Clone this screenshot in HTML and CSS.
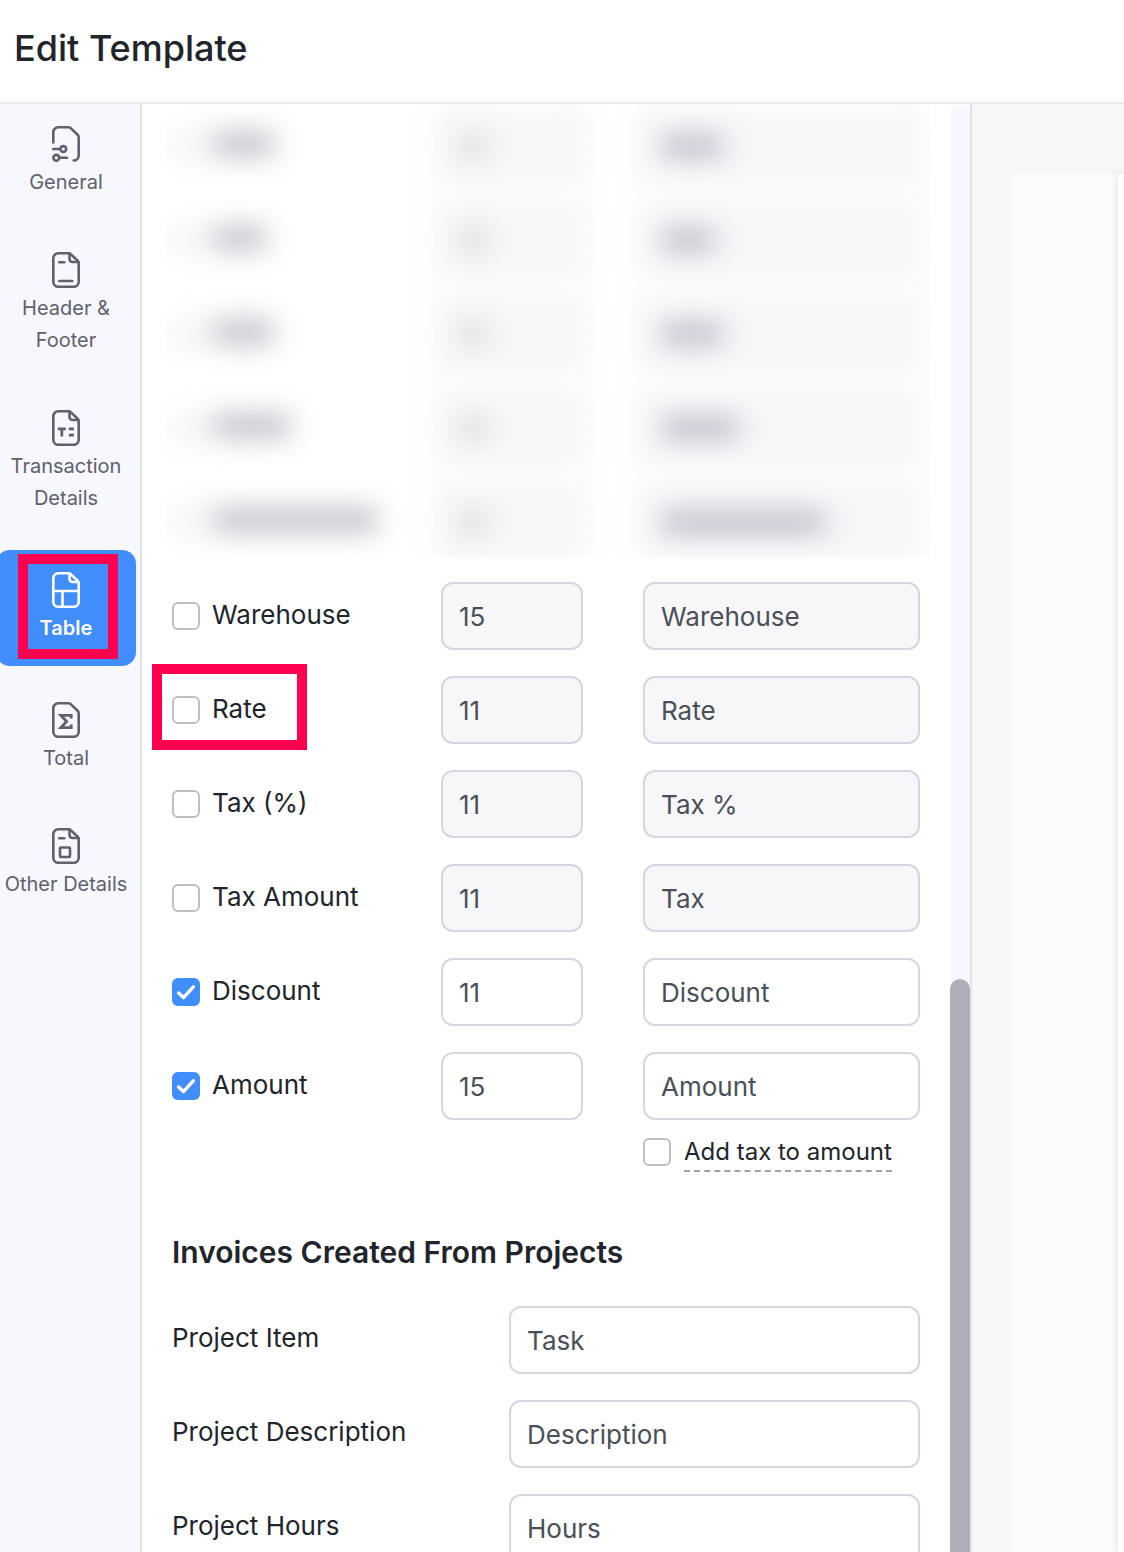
FILE: index.html
```html
<!DOCTYPE html>
<html lang="en">
<head>
  <meta charset="utf-8">
  <title>Edit Template</title>
  <link rel="stylesheet" href="styles.css">
</head>
<body>

  <header class="page-header">
    <h1>Edit Template</h1>
  </header>

  <div class="editor">

    <!-- Section navigation -->
    <nav class="sidebar">
      <a class="nav-item" href="#general">
        <svg class="nav-icon" viewBox="0 0 28 36">
          <path d="M1.3 16.5V6.3a5 5 0 0 1 5-5h9.9a4 4 0 0 1 2.8 1.1l6.4 6.1a4 4 0 0 1 1.3 2.9v18.1a5 5 0 0 1-5 5"/>
          <path d="M1.3 23h6.5M8.5 31.8H15"/>
          <circle cx="11.3" cy="23" r="2.9"/>
          <circle cx="4.3" cy="31.8" r="2.9"/>
        </svg>
        <span>General</span>
      </a>
      <a class="nav-item" href="#header-footer">
        <svg class="nav-icon" viewBox="0 0 28 36">
          <path d="M6.3 1.3h9.9a4 4 0 0 1 2.8 1.1l6.4 6.1a4 4 0 0 1 1.3 2.9v18.3a5 5 0 0 1-5 5H6.3a5 5 0 0 1-5-5V6.3a5 5 0 0 1 5-5z"/>
          <path d="M17.5 1.5V7a3 3 0 0 0 3 3h6M7.3 10.3h5M7.3 29h13"/>
        </svg>
        <span>Header &amp; Footer</span>
      </a>
      <a class="nav-item" href="#transaction">
        <svg class="nav-icon" viewBox="0 0 28 36">
          <path d="M6.3 1.3h9.9a4 4 0 0 1 2.8 1.1l6.4 6.1a4 4 0 0 1 1.3 2.9v18.3a5 5 0 0 1-5 5H6.3a5 5 0 0 1-5-5V6.3a5 5 0 0 1 5-5z"/>
          <path d="M17.5 1.5V7a3 3 0 0 0 3 3h6"/>
          <path class="flat" d="M5.8 18.8h8M9.8 18.8v7.6M16.8 18.8H22M16.8 25.2H22"/>
        </svg>
        <span>Transaction Details</span>
      </a>
      <a class="nav-item active" href="#table">
        <svg class="nav-icon" viewBox="0 0 28 36">
          <path d="M6.3 1.3h9.9a4 4 0 0 1 2.8 1.1l6.4 6.1a4 4 0 0 1 1.3 2.9v18.3a5 5 0 0 1-5 5H6.3a5 5 0 0 1-5-5V6.3a5 5 0 0 1 5-5z"/>
          <path d="M17.5 1.5V7a3 3 0 0 0 3 3h6M1.3 19h25.4M10.5 19v15.7"/>
        </svg>
        <span>Table</span>
      </a>
      <a class="nav-item" href="#total">
        <svg class="nav-icon" viewBox="0 0 28 36">
          <path d="M6.3 1.3h9.9a4 4 0 0 1 2.8 1.1l6.4 6.1a4 4 0 0 1 1.3 2.9v18.3a5 5 0 0 1-5 5H6.3a5 5 0 0 1-5-5V6.3a5 5 0 0 1 5-5z"/>
          <path class="flat" d="M19.2 16.5v-3.2H8.8l5.8 6.2-5.8 6.2h10.4v-3.2"/>
        </svg>
        <span>Total</span>
      </a>
      <a class="nav-item" href="#other">
        <svg class="nav-icon" viewBox="0 0 28 36">
          <path d="M6.3 1.3h9.9a4 4 0 0 1 2.8 1.1l6.4 6.1a4 4 0 0 1 1.3 2.9v18.3a5 5 0 0 1-5 5H6.3a5 5 0 0 1-5-5V6.3a5 5 0 0 1 5-5z"/>
          <path d="M17.5 1.5V7a3 3 0 0 0 3 3h6M7.3 10.3h5"/>
          <rect x="8" y="19.5" width="10" height="9.5" rx="1"/>
        </svg>
        <span>Other Details</span>
      </a>
    </nav>

    <!-- Table column settings -->
    <main class="panel">
      <form class="settings">

        <!-- Hidden rows -->
        <div class="redacted" aria-hidden="true">
          <div class="redacted-rows">
            <div class="field-row">
              <div class="label-cell"><i class="smudge-box"></i><i class="smudge w60"></i></div>
              <div class="smudge-field"><i class="smudge light"></i></div>
              <div class="smudge-field"><i class="smudge w60"></i></div>
            </div>
            <div class="field-row">
              <div class="label-cell"><i class="smudge-box"></i><i class="smudge w50"></i></div>
              <div class="smudge-field"><i class="smudge light"></i></div>
              <div class="smudge-field"><i class="smudge w50"></i></div>
            </div>
            <div class="field-row">
              <div class="label-cell"><i class="smudge-box"></i><i class="smudge w60"></i></div>
              <div class="smudge-field"><i class="smudge light"></i></div>
              <div class="smudge-field"><i class="smudge w60"></i></div>
            </div>
            <div class="field-row">
              <div class="label-cell"><i class="smudge-box"></i><i class="smudge w80"></i></div>
              <div class="smudge-field"><i class="smudge light"></i></div>
              <div class="smudge-field"><i class="smudge w80"></i></div>
            </div>
            <div class="field-row">
              <div class="label-cell"><i class="smudge-box"></i><i class="smudge w160"></i></div>
              <div class="smudge-field"><i class="smudge light"></i></div>
              <div class="smudge-field"><i class="smudge w160"></i></div>
            </div>
          </div>
        </div>

        <div class="field-list">
          <div class="field-row">
            <div class="label-cell">
              <input type="checkbox" class="check" id="warehouse">
              <label for="warehouse">Warehouse</label>
            </div>
            <input type="text" class="text-input" aria-label="Warehouse width" value="15" disabled>
            <input type="text" class="text-input" aria-label="Warehouse label" value="Warehouse" disabled>
          </div>
          <div class="field-row">
            <div class="label-cell marked">
              <input type="checkbox" class="check" id="rate">
              <label for="rate">Rate</label>
            </div>
            <input type="text" class="text-input" aria-label="Rate width" value="11" disabled>
            <input type="text" class="text-input" aria-label="Rate label" value="Rate" disabled>
          </div>
          <div class="field-row">
            <div class="label-cell">
              <input type="checkbox" class="check" id="tax-percent">
              <label for="tax-percent">Tax (%)</label>
            </div>
            <input type="text" class="text-input" aria-label="Tax (%) width" value="11" disabled>
            <input type="text" class="text-input" aria-label="Tax (%) label" value="Tax %" disabled>
          </div>
          <div class="field-row">
            <div class="label-cell">
              <input type="checkbox" class="check" id="tax-amount">
              <label for="tax-amount">Tax Amount</label>
            </div>
            <input type="text" class="text-input" aria-label="Tax Amount width" value="11" disabled>
            <input type="text" class="text-input" aria-label="Tax Amount label" value="Tax" disabled>
          </div>
          <div class="field-row">
            <div class="label-cell">
              <input type="checkbox" class="check" id="discount" checked>
              <label for="discount">Discount</label>
            </div>
            <input type="text" class="text-input" aria-label="Discount width" value="11">
            <input type="text" class="text-input" aria-label="Discount label" value="Discount">
          </div>
          <div class="field-row">
            <div class="label-cell">
              <input type="checkbox" class="check" id="amount" checked>
              <label for="amount">Amount</label>
            </div>
            <input type="text" class="text-input" aria-label="Amount width" value="15">
            <input type="text" class="text-input" aria-label="Amount label" value="Amount">
          </div>
        </div>

        <div class="add-tax">
          <input type="checkbox" class="check" id="add-tax">
          <label for="add-tax">Add tax to amount</label>
        </div>

        <h2>Invoices Created From Projects</h2>

        <div class="field-list">
          <div class="project-row">
            <label for="project-item">Project Item</label>
            <input type="text" class="text-input" id="project-item" value="Task">
          </div>
          <div class="project-row">
            <label for="project-description">Project Description</label>
            <input type="text" class="text-input" id="project-description" value="Description">
          </div>
          <div class="project-row">
            <label for="project-hours">Project Hours</label>
            <input type="text" class="text-input" id="project-hours" value="Hours">
          </div>
        </div>
      </form>

      <div class="scroll-track">
        <div class="scroll-thumb"></div>
      </div>
    </main>

    <!-- Template preview -->
    <section class="preview">
      <div class="preview-area">
        <div class="preview-page"></div>
      </div>
    </section>
  </div>

</body>
</html>
```

FILE: styles.css
```css
*,
*::after {
  box-sizing: border-box;
}
body {
  display: flex;
  flex-direction: column;
  height: 100vh;
  margin: 0;
  overflow: hidden;
  background-color: #fff;
  color: #21252b;
  font-family: Inter, "Liberation Sans", sans-serif;
  font-size: 26px;
}
.page-header {
  flex: none;
  padding: 24px 14px 30px;
  border-bottom: 2px solid #ebebed;
}
.page-header h1 {
  margin: 0;
  font-size: 36px;
  font-weight: 500;
  line-height: 48px;
}
.editor {
  display: flex;
  flex: 1;
  min-height: 0;
}

/* Sidebar */
.sidebar {
  display: flex;
  flex: none;
  flex-direction: column;
  gap: 10px;
  width: 142px;
  overflow: hidden;
  background-color: #f7f7fe;
  border-right: 2px solid #e2e2e6;
}
.nav-item {
  position: relative;
  display: flex;
  flex-direction: column;
  align-items: center;
  gap: 4px;
  margin: 0 4px 0 -4px;
  padding: 22px 6px;
  border-radius: 14px;
  color: #5f616c;
  font-size: 20px;
  line-height: 32px;
  text-align: center;
  text-decoration: none;
}
.nav-item.active {
  margin-top: 4px;
  margin-bottom: 4px;
  background-color: #408dfb;
  color: #fff;
  font-weight: 600;
}
/* Red frame around the open section */
.nav-item.active::after {
  content: "";
  position: absolute;
  inset: 4px 18px 7px 22px;
  border: 10px solid #ff0051;
}
.nav-icon {
  width: 28px;
  height: 36px;
  fill: none;
  stroke: currentColor;
  stroke-width: 2.6;
  stroke-linecap: round;
  stroke-linejoin: round;
}
.nav-icon .flat {
  stroke-width: 2.8;
  stroke-linecap: butt;
  stroke-linejoin: miter;
}

/* Settings panel */
.panel {
  display: flex;
  flex: 0 1 830px;
  overflow: hidden;
  border-right: 2px solid #e2e2e6;
}
.settings {
  flex: 1;
  min-width: 0;
  padding: 0 30px;
}
.field-list {
  display: flex;
  flex-direction: column;
  gap: 26px;
}
.field-row {
  display: grid;
  grid-template-columns: 1fr 142px 277px;
  column-gap: 60px;
  height: 68px;
}
.label-cell {
  position: relative;
  display: flex;
  align-items: center;
  gap: 12px;
}
.label-cell label {
  padding-bottom: 2px;
  line-height: 32px;
  white-space: nowrap;
}
/* Red frame around the Rate row */
.label-cell.marked::after {
  content: "";
  position: absolute;
  top: -12px;
  bottom: -6px;
  left: -20px;
  width: 155px;
  border: 10px solid #ff0051;
  pointer-events: none;
}
.check {
  appearance: none;
  flex: none;
  width: 28px;
  height: 28px;
  margin: 0;
  background-color: #fff;
  border: 2px solid #bfbfc2;
  border-radius: 6px;
}
.check:checked {
  background: #408dfb url("data:image/svg+xml,%3Csvg xmlns='http://www.w3.org/2000/svg' viewBox='0 0 28 28'%3E%3Cpath d='M6.6 15l4.9 4.6L21.3 8.8' fill='none' stroke='white' stroke-width='3.4' stroke-linecap='round' stroke-linejoin='round'/%3E%3C/svg%3E") center / 28px 28px no-repeat;
  border: 0;
}
.text-input {
  width: 100%;
  min-width: 0;
  height: 68px;
  padding: 0 16px;
  background-color: #fff;
  border: 2px solid #d7d5e2;
  border-radius: 12px;
  color: #495057;
  font: inherit;
}
.text-input:disabled {
  background-color: #f7f7fa;
}
.add-tax {
  display: flex;
  align-items: flex-start;
  gap: 13px;
  width: 277px;
  margin: 18px 0 0 auto;
}
.add-tax label {
  padding-bottom: 4px;
  border-bottom: 2px dashed #a0a0a6;
  font-size: 24px;
  line-height: 28px;
  white-space: nowrap;
}
.settings h2 {
  margin: 62px 0 36px;
  font-size: 30px;
  font-weight: 600;
  line-height: 36px;
}
.project-row {
  display: grid;
  grid-template-columns: 337px 1fr;
  align-items: center;
}
.project-row label {
  padding-bottom: 4px;
  line-height: 32px;
}

/* Blurred rows */
.redacted {
  margin: 0 -10px 24px -7px;
  overflow: hidden;
}
.redacted-rows {
  display: flex;
  flex-direction: column;
  gap: 26px;
  padding: 8px 10px 2px 7px;
  filter: blur(14px);
}
.smudge-field {
  display: flex;
  align-items: center;
  padding-left: 18px;
  background-color: #f7f7fa;
  box-shadow: 0 0 0 8px #f9f9fb;
}
.smudge-box {
  width: 28px;
  height: 28px;
  background-color: #f3f3f5;
}
.smudge {
  height: 22px;
  background-color: #bbb9c5;
}
.label-cell .smudge {
  margin-bottom: 4px;
}
.smudge.light {
  width: 28px;
  background-color: #d8d8db;
}
.w50 {
  width: 54px;
}
.w60 {
  width: 62px;
}
.w80 {
  width: 78px;
}
.w160 {
  width: 165px;
}

/* Scrollbar */
.scroll-track {
  display: flex;
  flex: none;
  flex-direction: column;
  justify-content: flex-end;
  width: 20px;
  background-color: #f7f7fe;
  border-radius: 10px 10px 0 0;
}
.scroll-thumb {
  height: 573px;
  background-color: #b0aebb;
  border-radius: 10px 10px 0 0;
}

/* Preview */
.preview {
  display: flex;
  flex: 1 0 152px;
  padding: 70px 0 0 40px;
  overflow: hidden;
  background-color: #f7f7fa;
}
.preview-area {
  flex: 1;
  padding-left: 106px;
  background-color: #fcfcfc;
}
.preview-page {
  height: 100%;
  background-color: #fff;
  box-shadow: 0 0 10px rgba(0, 0, 0, 0.15);
}
```
